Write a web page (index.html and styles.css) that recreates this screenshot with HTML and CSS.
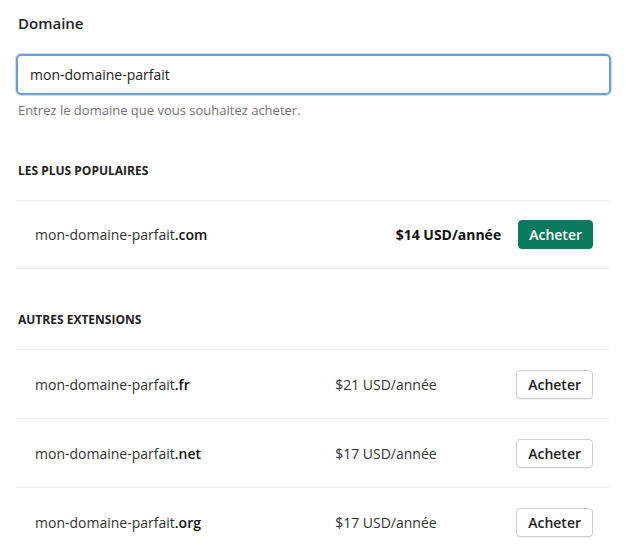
FILE: index.html
```html
<!DOCTYPE html>
<html lang="fr">
<head>
<meta charset="utf-8">
<link rel="stylesheet" href="styles.css">
</head>
<body>
<div class="page">
  <label class="label" for="domain">Domaine</label>
  <div class="input">mon-domaine-parfait</div>
  <p class="help">Entrez le domaine que vous souhaitez acheter.</p>

  <h3 class="section">LES PLUS POPULAIRES</h3>
  <div class="list">
    <div class="row popular">
      <span class="name">mon-domaine-parfait<b>.com</b></span>
      <span class="price bold">$14 USD/année</span>
      <button class="btn primary">Acheter</button>
    </div>
  </div>

  <h3 class="section other">AUTRES EXTENSIONS</h3>
  <div class="list">
    <div class="row">
      <span class="name">mon-domaine-parfait<b>.fr</b></span>
      <span class="price">$21 USD/année</span>
      <button class="btn">Acheter</button>
    </div>
    <div class="row">
      <span class="name">mon-domaine-parfait<b>.net</b></span>
      <span class="price">$17 USD/année</span>
      <button class="btn">Acheter</button>
    </div>
    <div class="row">
      <span class="name">mon-domaine-parfait<b>.org</b></span>
      <span class="price">$17 USD/année</span>
      <button class="btn">Acheter</button>
    </div>
  </div>
</div>
</body>
</html>
```

FILE: styles.css
```css
* { box-sizing: border-box; }
html, body { margin: 0; background: #fff; }
body {
  font-family: "Open Sans", "Noto Sans", sans-serif;
  color: #222;
  font-size: 14px;
}
.page {
  padding: 13px 16px 0 16px;
  width: 626px;
}
.label {
  display: block;
  font-size: 15px;
  font-weight: 600;
  margin-left: 2px;
  line-height: 20px;
}
.input {
  margin-top: 21px;
  height: 41px;
  width: 595px;
  border: 2px solid #6f9ed3;
  box-shadow: 0 0 0 1px #c9dcf0;
  border-radius: 5px;
  padding: 0 12px;
  display: flex;
  align-items: center;
  font-size: 14px;
  color: #222;
}
.help {
  margin: 5px 0 0 2px;
  font-size: 13px;
  color: #747474;
  line-height: 20px;
}
.section {
  margin: 42px 0 0 2px;
  font-size: 12px;
  font-weight: 700;
  line-height: 18px;
  color: #222;
}
.section.other { margin-top: 42px; }
.list {
  margin-top: 20px;
  width: 594px;
}
.row {
  display: grid;
  grid-template-columns: 1fr 181px auto;
  align-items: center;
  height: 69px;
  padding: 0 17px 0 19px;
  border-top: 1px solid #eeeeee;
}
.row.popular {
  grid-template-columns: 1fr auto auto;
  column-gap: 17px;
  border-bottom: 1px solid #eeeeee;
}
.name { font-size: 14px; color: #333; }
.name b { font-weight: 600; color: #111; }
.price { font-size: 14px; color: #333; }
.price.bold { font-weight: 700; color: #111; }
.btn {
  font-family: inherit;
  font-size: 14px;
  font-weight: 600;
  height: 29px;
  padding: 0 11px;
  border-radius: 4px;
  border: 1px solid #cfcfcf;
  background: #fff;
  color: #222;
  box-shadow: 0 1px 1px rgba(0,0,0,0.06);
}
.btn.primary {
  background: #0b7a5d;
  border-color: #0b7a5d;
  color: #fff;
  padding: 0 10px;
}
```
